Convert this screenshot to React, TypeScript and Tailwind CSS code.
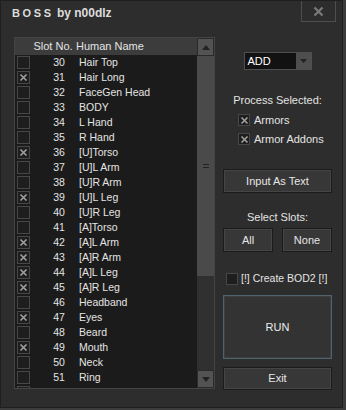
import React from "react";

type Slot = { no: number; name: string; on: boolean };

const slots: Slot[] = [
  { no: 30, name: "Hair Top", on: false },
  { no: 31, name: "Hair Long", on: true },
  { no: 32, name: "FaceGen Head", on: false },
  { no: 33, name: "BODY", on: false },
  { no: 34, name: "L Hand", on: false },
  { no: 35, name: "R Hand", on: false },
  { no: 36, name: "[U]Torso", on: true },
  { no: 37, name: "[U]L Arm", on: false },
  { no: 38, name: "[U]R Arm", on: false },
  { no: 39, name: "[U]L Leg", on: true },
  { no: 40, name: "[U]R Leg", on: false },
  { no: 41, name: "[A]Torso", on: false },
  { no: 42, name: "[A]L Arm", on: true },
  { no: 43, name: "[A]R Arm", on: true },
  { no: 44, name: "[A]L Leg", on: true },
  { no: 45, name: "[A]R Leg", on: true },
  { no: 46, name: "Headband", on: false },
  { no: 47, name: "Eyes", on: true },
  { no: 48, name: "Beard", on: false },
  { no: 49, name: "Mouth", on: true },
  { no: 50, name: "Neck", on: false },
  { no: 51, name: "Ring", on: false },
  { no: 52, name: "Scalp", on: true },
];

const CheckBox = ({ on, size = 13 }: { on: boolean; size?: number }) => (
  <div
    className="flex items-center justify-center border border-[#474747] bg-[#1e1e1e] shrink-0"
    style={{ width: size, height: size }}
  >
    {on && (
      <svg width="9" height="9" viewBox="0 0 9 9">
        <path d="M1.5 1.5 L7.5 7.5 M7.5 1.5 L1.5 7.5" stroke="#a0a0a0" strokeWidth="1.6" />
      </svg>
    )}
  </div>
);

const Btn = ({ label, className = "" }: { label: string; className?: string }) => (
  <div
    className={`flex items-center justify-center border border-[#1b1b1b] bg-[#373737] text-[#e6e6e6] shadow-[inset_0_0_0_1px_#454545] ${className}`}
  >
    {label}
  </div>
);

const ArrowBtn = ({ down }: { down?: boolean }) => (
  <div className="flex h-[18px] w-[17px] items-center justify-center border border-[#2a2a2a] bg-[#535353]">
    <svg width="8" height="5" viewBox="0 0 8 5">
      <path d={down ? "M0 0 L8 0 L4 5 Z" : "M0 5 L8 5 L4 0 Z"} fill="#222" />
    </svg>
  </div>
);

export default function App() {
  return (
    <div className="h-[410px] w-[346px] bg-[#3c3c3c] font-['Liberation_Sans',Arial,sans-serif] text-[10.5px] text-[#e4e4e4]">
      <div className="flex h-[408px] w-[343px] flex-col border border-[#1f1f1f] bg-[#2d2d2d]">
        {/* title bar */}
        <div className="flex h-[21px] items-center justify-between">
          <div className="pl-[11px] pt-[3px] text-[12px] font-bold text-[#dcdcdc]">
            <span className="text-[11px] tracking-[2.6px]">BOSS</span> by n00dlz
          </div>
          <div className="mr-[6px] flex h-[21px] w-[35px] items-center justify-center border border-t-0 border-[#4e4e4e]">
            <svg width="11" height="11" viewBox="0 0 11 11">
              <path d="M1.5 1.5 L9.5 9.5 M9.5 1.5 L1.5 9.5" stroke="#7a7a7a" strokeWidth="2.2" />
            </svg>
          </div>
        </div>

        <div className="flex pl-[13px] pt-[15px]">
          {/* slot list */}
          <div className="flex h-[352px] w-[201px] border border-[#444] bg-[#1b1b1b]">
            <div className="flex-1 overflow-hidden">
              <div className="flex h-[17px] items-center bg-[#3c3c3c] text-[11px]">
                <div className="w-[16px]" />
                <div className="w-[44px] text-center">Slot No.</div>
                <div className="pl-[1px]">Human Name</div>
              </div>
              {slots.map((s) => (
                <div key={s.no} className="flex h-[15px] items-center text-[10.5px]">
                  <div className="w-[16px] pl-[2px]">
                    <CheckBox on={s.on} />
                  </div>
                  <div className="w-[44px] pl-[12px] text-center">{s.no}</div>
                  <div className="pl-[4px]">{s.name}</div>
                </div>
              ))}
            </div>
            {/* scrollbar */}
            <div className="flex w-[17px] flex-col bg-[#303030]">
              <ArrowBtn />
              <div className="flex h-[220px] items-center justify-center bg-[#4a4a4a]">
                <div className="flex flex-col gap-[2px]">
                  <div className="h-[1px] w-[6px] bg-[#222]" />
                  <div className="h-[1px] w-[6px] bg-[#222]" />
                </div>
              </div>
              <div className="flex-1" />
              <ArrowBtn down />
            </div>
          </div>

          {/* right panel */}
          <div className="ml-[8px] flex w-[109px] flex-col items-center text-[11px]">
            <div className="mt-[15px] flex h-[18px] w-[68px] items-center border border-[#4f4f4f] bg-[#121212]">
              <div className="flex-1 pl-[3px] text-[11px] text-white">ADD</div>
              <div className="flex h-full w-[15px] items-center justify-center bg-[#4e4e4e]">
                <svg width="7" height="4" viewBox="0 0 7 4">
                  <path d="M0 0 L7 0 L3.5 4 Z" fill="#222" />
                </svg>
              </div>
            </div>

            <div className="mt-[23px] h-[14px] leading-[14px]">Process Selected:</div>
            <div className="mt-[6px] flex h-[14px] w-full items-center gap-[4px] pl-[15px]">
              <CheckBox on size={12} />
              <span>Armors</span>
            </div>
            <div className="mt-[5px] flex h-[14px] w-full items-center gap-[4px] pl-[15px]">
              <CheckBox on size={12} />
              <span>Armor Addons</span>
            </div>

            <Btn label="Input As Text" className="mt-[23px] h-[24px] w-full" />

            <div className="mt-[17px] h-[14px] leading-[14px]">Select Slots:</div>
            <div className="mt-[4px] flex w-full justify-between">
              <Btn label="All" className="h-[24px] w-[50px]" />
              <Btn label="None" className="h-[24px] w-[50px]" />
            </div>

            <div className="mt-[20px] flex h-[14px] w-[114px] items-center gap-[3px] self-start pl-[3px] text-[10.5px] whitespace-nowrap">
              <CheckBox on={false} size={12} />
              <span>[!] Create BOD2 [!]</span>
            </div>

            <div className="mt-[9px] flex h-[64px] w-full items-center justify-center border border-[#50646f] bg-[#333] text-[#eee] shadow-[inset_0_0_0_1px_#3e3e3e]">
              RUN
            </div>
            <Btn label="Exit" className="mt-[8px] h-[23px] w-full" />
          </div>
        </div>
      </div>
    </div>
  );
}
